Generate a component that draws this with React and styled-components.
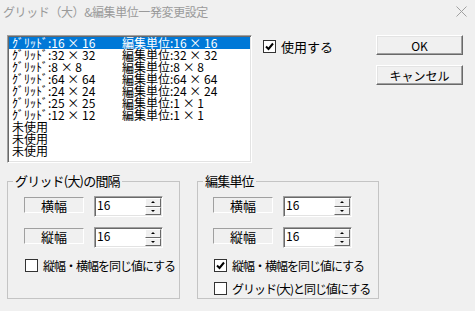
import React from 'react';
import styled, { createGlobalStyle } from 'styled-components';

const GlobalStyle = createGlobalStyle`
  body {
    margin: 0;
    background: #f0f0f0;
    font-family: "Noto Sans CJK JP", "Noto Sans", sans-serif;
  }
`;

const rows = [
  ['16 × 16', '16 × 16'],
  ['32 × 32', '32 × 32'],
  ['8 × 8', '8 × 8'],
  ['64 × 64', '64 × 64'],
  ['24 × 24', '24 × 24'],
  ['25 × 25', '1 × 1'],
  ['12 × 12', '1 × 1'],
];

const Check = ({ checked }) => (
  <Box>
    {checked && (
      <svg width="11" height="11" viewBox="0 0 11 11">
        <polyline points="2,5.5 4.5,8 9,2.5" fill="none" stroke="#000" strokeWidth="2" />
      </svg>
    )}
  </Box>
);

const Spin = ({ value }) => (
  <Edit>
    <EditText>{value}</EditText>
    <SpinCol>
      <SpinBtn>
        <Arrow />
      </SpinBtn>
      <SpinBtn>
        <Arrow down />
      </SpinBtn>
    </SpinCol>
  </Edit>
);

const SizeFields = () => (
  <FieldGrid>
    <Label>横幅</Label>
    <Spin value="16" />
    <Label>縦幅</Label>
    <Spin value="16" />
  </FieldGrid>
);

const App = () => {
  return (
    <Window>
      <GlobalStyle />
      <TitleBar>
        <Title>グリッド（大）&amp;編集単位一発変更設定</Title>
        <svg width="11" height="11" viewBox="0 0 11 11">
          <path d="M0.5 0.5 L10.5 10.5 M10.5 0.5 L0.5 10.5" stroke="#a0a0a0" strokeWidth="1" />
        </svg>
      </TitleBar>

      <Top>
        <ListBox>
          {rows.map((r, i) => (
            <ListRow key={i} $selected={i === 0}>
              <Cell>{`ｸﾞﾘｯﾄﾞ:${r[0]}`}</Cell>
              <span>{`編集単位:${r[1]}`}</span>
            </ListRow>
          ))}
          {[0, 1, 2].map((i) => (
            <ListRow key={'u' + i}>
              <span>未使用</span>
            </ListRow>
          ))}
        </ListBox>

        <UseCheck>
          <Check checked />
          <span>使用する</span>
        </UseCheck>

        <Buttons>
          <Button>OK</Button>
          <Button>キャンセル</Button>
        </Buttons>
      </Top>

      <Groups>
        <Group $width={173} $padLeft={16}>
          <Legend $shift={-11}>グリッド(大)の間隔</Legend>
          <SizeFields />
          <CheckRow>
            <Check />
            <span>縦幅・横幅を同じ値にする</span>
          </CheckRow>
        </Group>
        <Group $width={182} $padLeft={15}>
          <Legend $shift={-10}>編集単位</Legend>
          <SizeFields />
          <CheckRow>
            <Check checked />
            <span>縦幅・横幅を同じ値にする</span>
          </CheckRow>
          <CheckRow $tight>
            <Check />
            <span>グリッド(大)と同じ値にする</span>
          </CheckRow>
        </Group>
      </Groups>
    </Window>
  );
};

const Window = styled.div`
  width: 475px;
  height: 311px;
  background: #f0f0f0;
  color: #000;
  font-size: 12px;
  overflow: hidden;
`;

const TitleBar = styled.div`
  height: 22px;
  display: flex;
  align-items: center;
  justify-content: space-between;
  padding: 0 8px 0 3px;
  box-sizing: border-box;
`;

const Title = styled.div`
  font-size: 12px;
  letter-spacing: -0.4px;
  color: #9a9a9a;
`;

const Top = styled.div`
  display: flex;
  align-items: flex-start;
  padding: 13px 12px 0 7px;
`;

const ListBox = styled.div`
  width: 245px;
  height: 128px;
  box-sizing: border-box;
  background: #fff;
  border: 1px solid;
  border-color: #a0a0a0 #fff #fff #a0a0a0;
  box-shadow: inset 1px 1px #696969, inset -1px -1px #e3e3e3;
  padding: 1px 1px 0 1px;
  overflow: hidden;
`;

const ListRow = styled.div`
  display: flex;
  height: 12px;
  line-height: 12px;
  padding-left: 3px;
  font-size: 12px;
  white-space: nowrap;
  background: ${(p) => (p.$selected ? '#0078d7' : 'transparent')};
  color: ${(p) => (p.$selected ? '#fff' : '#000')};
`;

const Cell = styled.span`
  width: 110px;
  flex: none;
`;

const UseCheck = styled.label`
  display: flex;
  align-items: center;
  gap: 5px;
  margin: 2px 0 0 11px;
  font-size: 13px;
  white-space: nowrap;
`;

const Buttons = styled.div`
  margin: 0 0 0 auto;
  display: flex;
  flex-direction: column;
  gap: 10px;
`;

const Button = styled.button`
  width: 87px;
  height: 20px;
  padding: 0;
  font: inherit;
  font-size: 12px;
  background: #f0f0f0;
  border: 1px solid;
  border-color: #fff #696969 #696969 #fff;
  box-shadow: inset -1px -1px #a0a0a0, inset 1px 1px #e3e3e3;
  color: #000;
`;

const Groups = styled.div`
  display: flex;
  gap: 17px;
  padding: 11px 0 0 7px;
`;

const Group = styled.fieldset`
  width: ${(p) => p.$width}px;
  height: 125px;
  box-sizing: border-box;
  margin: 0;
  padding: 8px 0 0 ${(p) => p.$padLeft}px;
  border: 1px solid #c4c4c4;
  min-inline-size: 0;
`;

const Legend = styled.legend`
  margin-left: ${(p) => p.$shift}px;
  padding: 0 2px;
  font-size: 13px;
  line-height: 14px;
  letter-spacing: -0.8px;
  white-space: nowrap;
`;

const FieldGrid = styled.div`
  display: grid;
  grid-template-columns: 60px 69px;
  column-gap: 10px;
  row-gap: 10px;
  align-items: start;
`;

const Label = styled.div`
  margin-top: 1px;
  height: 16px;
  box-sizing: border-box;
  border: 1px solid;
  border-color: #a0a0a0 #fff #fff #a0a0a0;
  display: flex;
  align-items: center;
  justify-content: center;
  font-size: 13px;
`;

const Edit = styled.div`
  height: 21px;
  box-sizing: border-box;
  display: flex;
  background: #fff;
  border: 1px solid;
  border-color: #a0a0a0 #fff #fff #a0a0a0;
  box-shadow: inset 1px 1px #696969, inset -1px -1px #e3e3e3;
`;

const EditText = styled.div`
  flex: 1;
  padding: 1px 0 0 2px;
  font-size: 12px;
  line-height: 14px;
`;

const SpinCol = styled.div`
  width: 16px;
  display: flex;
  flex-direction: column;
  padding: 1px 1px 1px 0;
`;

const SpinBtn = styled.div`
  flex: 1;
  box-sizing: border-box;
  background: #f0f0f0;
  border: 1px solid;
  border-color: #fff #696969 #696969 #fff;
  display: flex;
  align-items: center;
  justify-content: center;
`;

const Arrow = styled.div`
  width: 0;
  height: 0;
  border-left: 2px solid transparent;
  border-right: 2px solid transparent;
  ${(p) => (p.down ? 'border-top: 2px solid #000;' : 'border-bottom: 2px solid #000;')}
`;

const CheckRow = styled.label`
  display: flex;
  align-items: center;
  gap: 5px;
  margin: ${(p) => (p.$tight ? '6px' : '9px')} 0 0 1px;
  font-size: 12px;
  letter-spacing: -1px;
  white-space: nowrap;
`;

const Box = styled.div`
  width: 13px;
  height: 13px;
  box-sizing: border-box;
  flex: none;
  background: #fff;
  border: 1px solid #333;
  display: flex;
  align-items: center;
  justify-content: center;
`;

export default App;
